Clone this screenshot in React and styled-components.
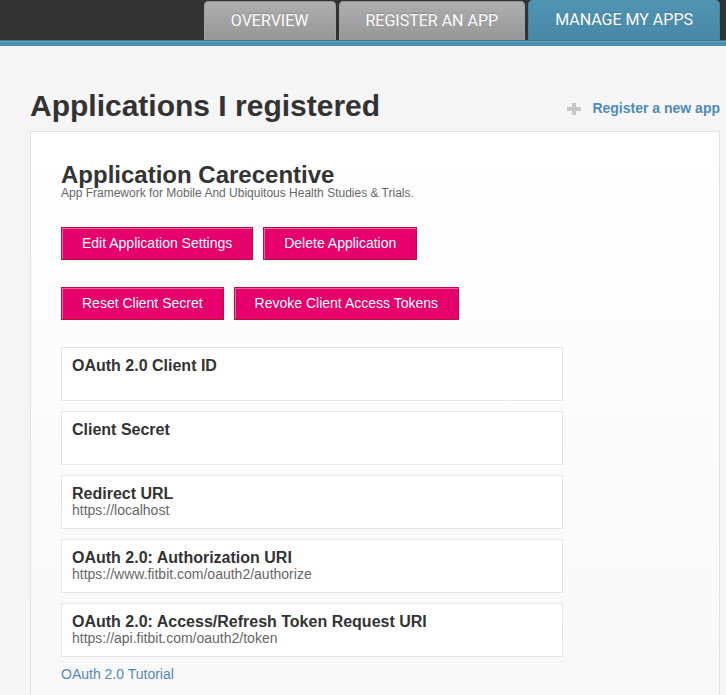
import React from "react";
import styled, { createGlobalStyle } from "styled-components";

const GlobalStyle = createGlobalStyle`
  *, *::before, *::after { box-sizing: border-box; }
  html { background: #f5f5f5; }
  body {
    margin: 0;
    color: #333;
    font-family: "Liberation Sans", Arial, sans-serif;
    font-size: 14px;
    line-height: 16px;
  }
`;

const Page = styled.div`
  display: flex;
  flex-direction: column;
  min-height: 100vh;
`;

const Header = styled.header`
  background: #333;
  border-bottom: 4px solid #4b8fae;
  box-shadow: inset 0 -1px #5ba2bd, inset 0 -2px #3f7897;
`;

const Tabs = styled.nav`
  display: flex;
  justify-content: flex-end;
  align-items: flex-end;
  gap: 3px;
  padding: 0 6px 2px 0;
`;

const Tab = styled.a`
  display: flex;
  align-items: center;
  height: ${(p) => (p.$active ? 40 : 39)}px;
  padding: 0 27px;
  border-radius: 5px 5px 0 0;
  background: ${(p) =>
    p.$active
      ? "linear-gradient(#5094b3, #4987a7)"
      : "linear-gradient(#afafaf, #969696)"};
  box-shadow: ${(p) =>
    p.$active
      ? "inset 1px 0 #4582a0, inset -1px 0 #4582a0"
      : "inset 0 1px #929292, inset 1px 0 #a2a2a2, inset -1px 0 #a2a2a2"};
  color: #fff;
  font-family: Roboto, sans-serif;
  font-size: 16px;
  line-height: 20px;
  text-decoration: none;
  text-shadow: 0 -1px rgba(0, 0, 0, 0.2);
  white-space: nowrap;
`;

const Main = styled.main`
  display: flex;
  flex: 1;
  flex-direction: column;
  padding: 40px 6px 0 30px;
`;

const TitleRow = styled.div`
  display: flex;
  justify-content: space-between;
  align-items: center;
  height: 45px;
`;

const Title = styled.h1`
  margin: 0;
  padding-bottom: 6px;
  font-size: 30px;
  line-height: 34px;
`;

const RegisterLink = styled.a`
  display: flex;
  align-items: center;
  gap: 11px;
  padding-bottom: 2px;
  color: #4f8bb5;
  font-weight: bold;
  text-decoration: none;
`;

const PlusIcon = styled.svg`
  display: block;
  width: 14px;
  height: 12px;
  margin-top: 3px;
  fill: #c7c7c7;
`;

const Panel = styled.section`
  flex: 1;
  padding: 31px 30px 12px;
  border: 1px solid #e2e2e2;
  border-bottom: 0;
  background: linear-gradient(#fff, #f8f8f8);
`;

const AppName = styled.h2`
  margin: 0;
  font-size: 24px;
  line-height: 24px;
`;

const Description = styled.p`
  margin: 0 0 27px;
  color: #666;
  font-size: 12px;
  line-height: 13px;
`;

const Actions = styled.div`
  display: flex;
  gap: 10px;
  margin-bottom: 27px;
`;

const ActionButton = styled.button`
  height: 33px;
  padding: 0 20px 2px;
  border: 1px solid #b8123f;
  border-radius: 0;
  background: #e5006c;
  box-shadow: inset 1px 1px #f0629f;
  color: #fff;
  font: 14px/16px "Liberation Sans", Arial, sans-serif;
  white-space: nowrap;
  cursor: pointer;
`;

const Details = styled.dl`
  display: grid;
  gap: 10px;
  max-width: 502px;
  margin: 0 0 9px;
`;

const Detail = styled.div`
  min-height: 54px;
  padding: 10px;
  border: 1px solid #e5e5e5;
  background: #fff;
`;

const Label = styled.dt`
  font-size: 16px;
  font-weight: bold;
  line-height: 16px;
`;

const Value = styled.dd`
  margin: 0;
  color: #666;
`;

const TutorialLink = styled.a`
  color: #5588b4;
  text-decoration: none;
`;

const tabs = ["OVERVIEW", "REGISTER AN APP", "MANAGE MY APPS"];

const actionRows = [
  ["Edit Application Settings", "Delete Application"],
  ["Reset Client Secret", "Revoke Client Access Tokens"],
];

const details = [
  ["OAuth 2.0 Client ID", ""],
  ["Client Secret", ""],
  ["Redirect URL", "https://localhost"],
  ["OAuth 2.0: Authorization URI", "https://www.fitbit.com/oauth2/authorize"],
  ["OAuth 2.0: Access/Refresh Token Request URI", "https://api.fitbit.com/oauth2/token"],
];

export default function App() {
  return (
    <Page>
      <GlobalStyle />
      <Header>
        <Tabs>
          {tabs.map((tab, i) => (
            <Tab key={tab} href="#" $active={i === 2} aria-current={i === 2 ? "page" : undefined}>
              {tab}
            </Tab>
          ))}
        </Tabs>
      </Header>
      <Main>
        <TitleRow>
          <Title>Applications I registered</Title>
          <RegisterLink href="#">
            <PlusIcon viewBox="0 0 14 12" aria-hidden="true">
              <path d="M5 0h4v4h5v4H9v4H5V8H0V4h5z" />
            </PlusIcon>
            Register a new app
          </RegisterLink>
        </TitleRow>
        <Panel>
          <AppName>Application Carecentive</AppName>
          <Description>App Framework for Mobile And Ubiquitous Health Studies &amp; Trials.</Description>
          {actionRows.map((row) => (
            <Actions key={row[0]}>
              {row.map((label) => (
                <ActionButton key={label} type="button">{label}</ActionButton>
              ))}
            </Actions>
          ))}
          <Details>
            {details.map(([label, value]) => (
              <Detail key={label}>
                <Label>{label}</Label>
                <Value>{value}</Value>
              </Detail>
            ))}
          </Details>
          <TutorialLink href="#">OAuth 2.0 Tutorial</TutorialLink>
        </Panel>
      </Main>
    </Page>
  );
}
